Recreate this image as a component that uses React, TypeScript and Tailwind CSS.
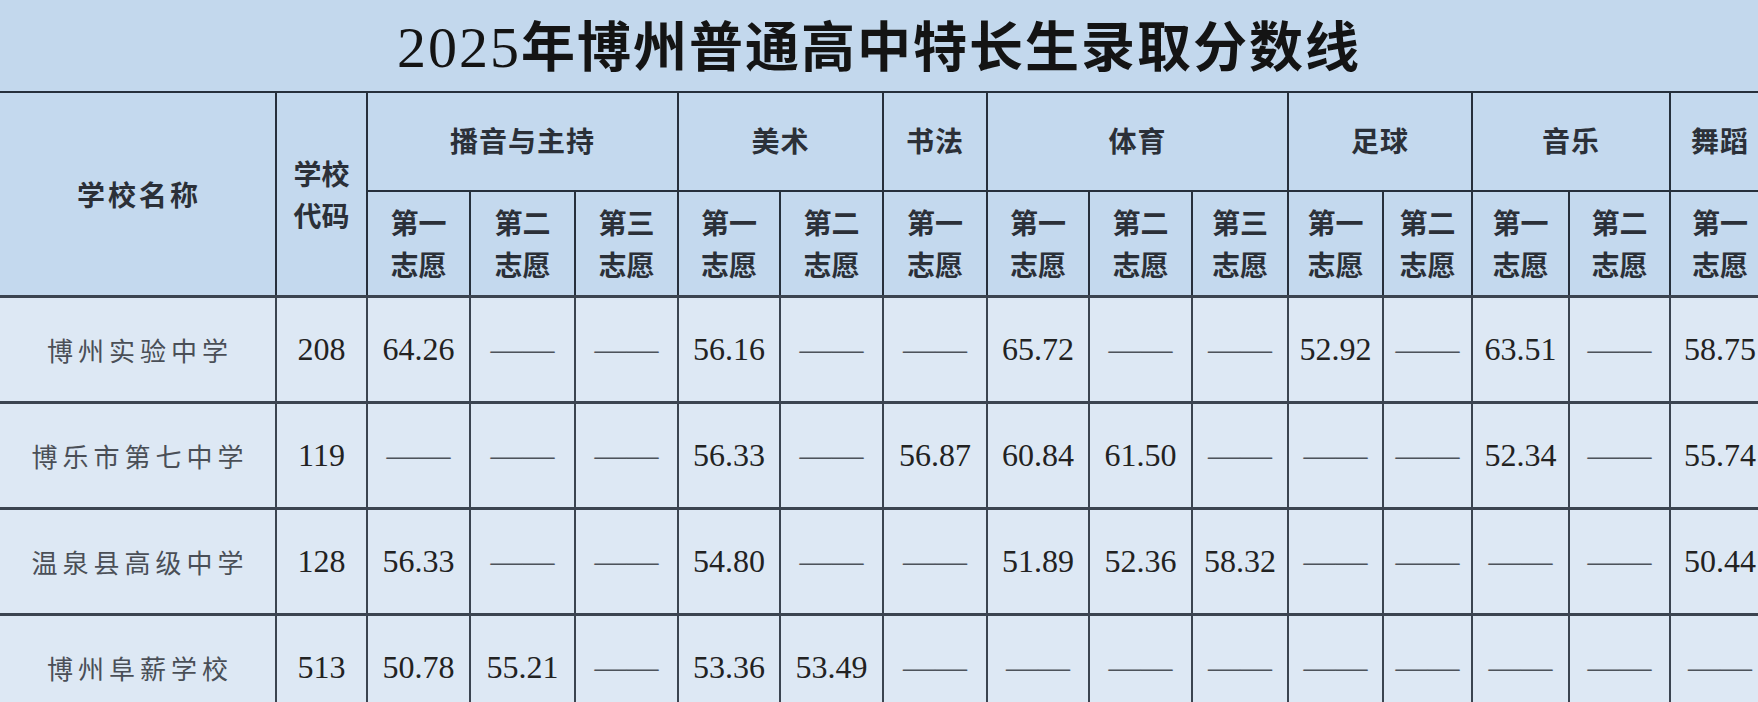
import React from 'react';

const colWidths = [276, 91, 103, 105, 103, 102, 103, 104, 102, 103, 96, 95, 89, 97, 101, 100];

const groups = [
  { name: '播音与主持', subs: ['第一', '第二', '第三'] },
  { name: '美术', subs: ['第一', '第二'] },
  { name: '书法', subs: ['第一'] },
  { name: '体育', subs: ['第一', '第二', '第三'] },
  { name: '足球', subs: ['第一', '第二'] },
  { name: '音乐', subs: ['第一', '第二'] },
  { name: '舞蹈', subs: ['第一'] },
];

const D = '——';

const rows = [
  { school: '博州实验中学', code: '208', scores: ['64.26', D, D, '56.16', D, D, '65.72', D, D, '52.92', D, '63.51', D, '58.75'] },
  { school: '博乐市第七中学', code: '119', scores: [D, D, D, '56.33', D, '56.87', '60.84', '61.50', D, D, D, '52.34', D, '55.74'] },
  { school: '温泉县高级中学', code: '128', scores: ['56.33', D, D, '54.80', D, D, '51.89', '52.36', '58.32', D, D, D, D, '50.44'] },
  { school: '博州阜薪学校', code: '513', scores: ['50.78', '55.21', D, '53.36', '53.49', D, D, D, D, D, D, D, D, D] },
];

const sans = 'font-["Noto_Sans_CJK_SC",sans-serif]';
const serif = 'font-["Liberation_Serif","Noto_Sans_CJK_SC",serif]';

export default function App() {
  return (
    <div className="w-[1758px] h-[702px] overflow-hidden bg-[#c4d9ee]">
      {/* title band */}
      <div className="h-[91px] flex items-center justify-center bg-[#c3d8ed] pt-1">
        <h1 className={`${serif} text-[54px] leading-none tracking-[2px] text-[#141414] font-bold`}>
          <span className="font-normal text-[58px]">2025</span>年博州普通高中特长生录取分数线
        </h1>
      </div>

      <table className="table-fixed border-collapse w-[1770px]">
        <colgroup>
          {colWidths.map((w, i) => (
            <col key={i} style={{ width: w }} />
          ))}
        </colgroup>
        <thead className={`${sans} text-[28px] font-bold text-[#2b3038]`}>
          <tr className="h-[99px]">
            <th rowSpan={2} className="border-y-2 border-r-2 border-[#26303c] font-bold tracking-[3px] pl-[3px]">
              学校名称
            </th>
            <th rowSpan={2} className="border-2 border-[#26303c] leading-[42px] font-bold">
              学校
              <br />
              代码
            </th>
            {groups.map((g) => (
              <th key={g.name} colSpan={g.subs.length} className="border-2 border-[#26303c] font-bold tracking-[1px] pb-1">
                {g.name}
              </th>
            ))}
          </tr>
          <tr className="h-[105px]">
            {groups.flatMap((g) =>
              g.subs.map((s, i) => (
                <th key={g.name + i} className="border-2 border-[#26303c] leading-[42px] font-bold">
                  {s}
                  <br />
                  志愿
                </th>
              ))
            )}
          </tr>
        </thead>
        <tbody className="bg-[#dde8f4]">
          {rows.map((r) => (
            <tr key={r.code} className="h-[106px]">
              <td className={`${sans} border-y-[3px] border-r-2 border-[#3b4450] text-center text-[26px] tracking-[5px] pl-[5px] text-[#4a4f57]`}>
                {r.school}
              </td>
              <td className={`${serif} border-y-[3px] border-x-2 border-[#3b4450] text-center text-[32px] text-[#222]`}>
                {r.code}
              </td>
              {r.scores.map((s, i) => (
                <td
                  key={i}
                  className={`${serif} border-y-[3px] border-x-2 border-[#3b4450] text-center text-[32px] ${
                    s === D ? 'text-[#4d535b]' : 'text-[#222]'
                  }`}
                >
                  {s}
                </td>
              ))}
            </tr>
          ))}
        </tbody>
      </table>
    </div>
  );
}
